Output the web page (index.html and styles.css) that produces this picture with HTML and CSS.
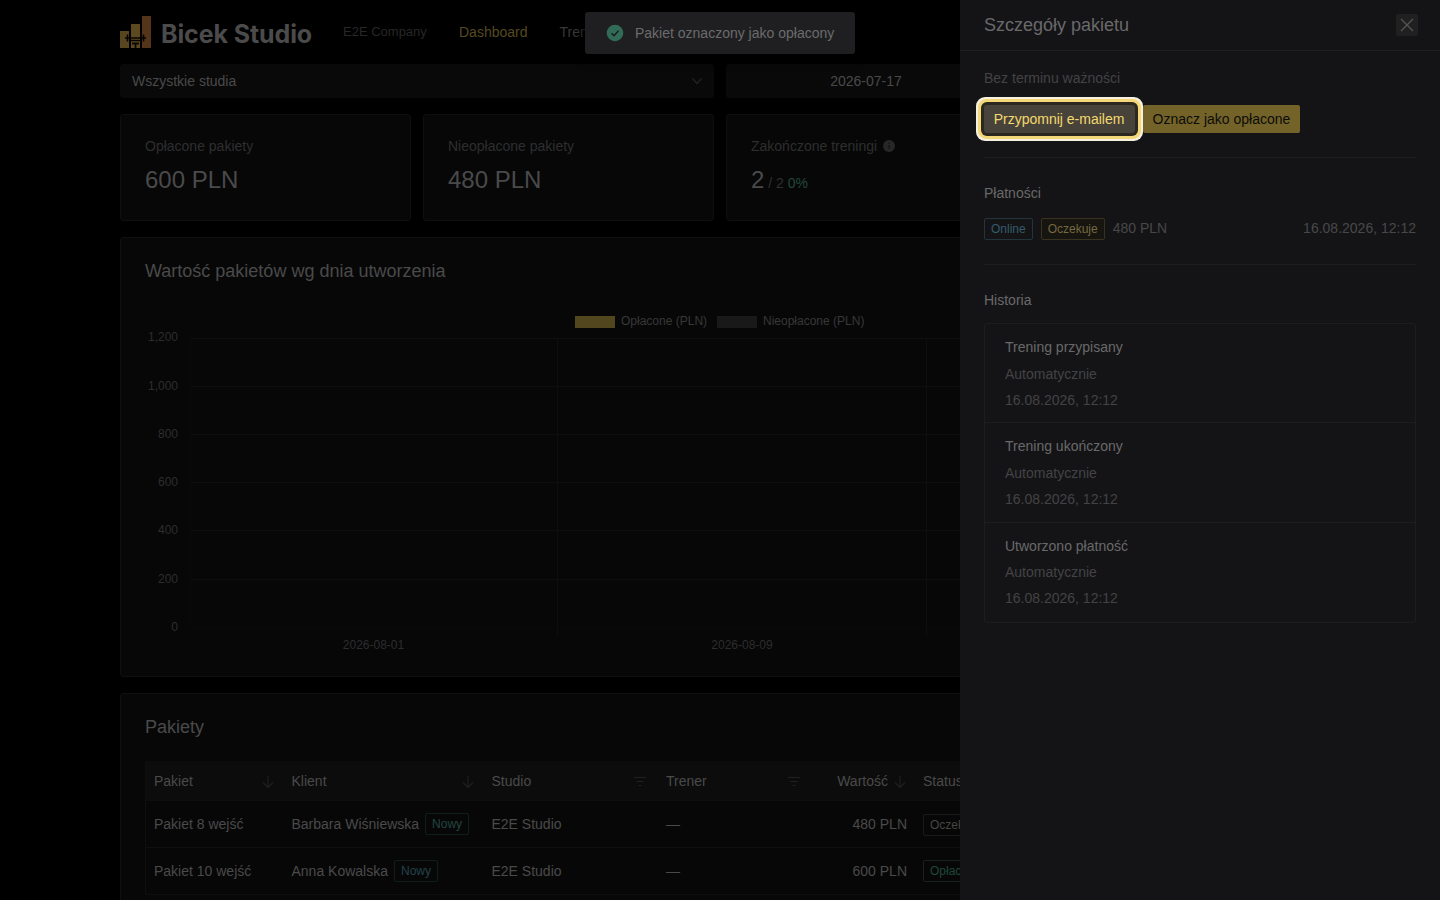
FILE: index.html
```html
<!DOCTYPE html>
<html lang="pl">
<head>
<meta charset="utf-8">
<title>Bicek Studio</title>
<link rel="stylesheet" href="styles.css">
</head>
<body>
<div class="page">
  <header class="header">
    <div class="brand">
      <svg class="brand-icon" width="31" height="32" viewBox="0 0 31 32">
        <rect x="0" y="15" width="9" height="17" fill="#57461f"/>
        <rect x="11" y="8" width="9" height="24" fill="#5c4922"/>
        <rect x="22" y="0" width="9" height="32" fill="#55351a"/>
        <path d="M5 22H26M7.500 18.500V25.500M23.500 18.500V25.500" stroke="#060402" stroke-width="1.600" fill="none"/>
        <path d="M11 24.500H20" stroke="#060402" stroke-width="1.400"/>
        <path d="M12 27.500H19M15.500 27.500V32" stroke="#0c0903" stroke-width="1.800" fill="none"/>
      </svg>
      <span class="brand-name">Bicek Studio</span>
    </div>
    <span class="company">E2E Company</span>
    <nav class="nav"><a class="active">Dashboard</a><a>Treningi</a></nav>
  </header>

  <main class="main">
    <div class="filters">
      <div class="select"><span>Wszystkie studia</span>
        <svg width="12" height="12" viewBox="0 0 12 12"><path d="M1.500 3.500L6 8.500L10.500 3.500" fill="none" stroke="#232323" stroke-width="1.200"/></svg>
      </div>
      <div class="range"><span>2026-07-17</span></div>
    </div>

    <div class="stats">
      <section class="card stat"><div class="label">Opłacone pakiety</div><div class="value">600 PLN</div></section>
      <section class="card stat"><div class="label">Nieopłacone pakiety</div><div class="value">480 PLN</div></section>
      <section class="card stat">
        <div class="label">Zakończone treningi
          <svg width="12" height="12" viewBox="0 0 12 12"><circle cx="6" cy="6" r="6" fill="#272727"/><path d="M6 5V9M6 2.800V4" stroke="#151515" stroke-width="1.200"/></svg>
        </div>
        <div class="value">2<span class="of"> / 2 </span><span class="pct">0%</span></div>
      </section>
      <section class="card stat"></section>
    </div>

    <section class="card chart-card">
      <h2>Wartość pakietów wg dnia utworzenia</h2>
      <svg class="chart" width="1150" height="360" viewBox="0 0 1150 360">
        <rect x="430" y="16" width="40" height="12" fill="#52461e"/>
        <text x="476" y="25" class="legend">Opłacone (PLN)</text>
        <rect x="572" y="16" width="40" height="12" fill="#191919"/>
        <text x="618" y="25" class="legend">Nieopłacone (PLN)</text>
        <path class="grid" d="M45 38.500H1150M45 86.500H1150M45 134.500H1150M45 182.500H1150M45 230.500H1150M45 279.500H1150M412.500 38V336M781.500 38V336"/>
        <path class="grid faint" d="M45 327.500H1150M45.500 38V327"/>
        <g class="axis end">
          <text x="33" y="41">1,200</text><text x="33" y="90">1,000</text><text x="33" y="138">800</text><text x="33" y="186">600</text><text x="33" y="234">400</text><text x="33" y="283">200</text><text x="33" y="331">0</text>
        </g>
        <g class="axis mid"><text x="228.500" y="349">2026-08-01</text><text x="597" y="349">2026-08-09</text></g>
      </svg>
    </section>

    <section class="card table-card">
      <h2>Pakiety</h2>
      <table class="table">
        <colgroup><col class="c1"><col class="c2"><col class="c3"><col class="c4"><col class="c5"><col></colgroup>
        <thead><tr>
          <th><div class="th"><span>Pakiet</span><svg width="14" height="14" viewBox="0 0 14 14"><path class="ic" d="M7 1V12.500M2 7.500L7 12.500L12 7.500"/></svg></div></th>
          <th><div class="th"><span>Klient</span><svg width="14" height="14" viewBox="0 0 14 14"><path class="ic" d="M7 1V12.500M2 7.500L7 12.500L12 7.500"/></svg></div></th>
          <th><div class="th filter"><span>Studio</span><svg width="14" height="14" viewBox="0 0 14 14"><path class="ic" d="M1 2.500H13M3.500 6.500H10.500M5.500 10.500H8.500"/></svg></div></th>
          <th><div class="th filter"><span>Trener</span><svg width="14" height="14" viewBox="0 0 14 14"><path class="ic" d="M1 2.500H13M3.500 6.500H10.500M5.500 10.500H8.500"/></svg></div></th>
          <th><div class="th right"><span>Wartość</span><svg width="14" height="14" viewBox="0 0 14 14"><path class="ic" d="M7 1V12.500M2 7.500L7 12.500L12 7.500"/></svg></div></th>
          <th>Status</th>
        </tr></thead>
        <tbody>
          <tr><td>Pakiet 8 wejść</td><td>Barbara Wiśniewska<span class="tag new">Nowy</span></td><td>E2E Studio</td><td>—</td><td class="num">480 PLN</td><td><span class="tag wait">Oczekuje</span></td></tr>
          <tr><td>Pakiet 10 wejść</td><td>Anna Kowalska<span class="tag new alt">Nowy</span></td><td>E2E Studio</td><td>—</td><td class="num">600 PLN</td><td><span class="tag paid">Opłacone</span></td></tr>
        </tbody>
      </table>
    </section>
  </main>
</div>

<div class="toast">
  <svg width="18" height="18" viewBox="0 0 18 18"><circle cx="9" cy="9" r="8.300" fill="#326b58"/><path d="M5.500 9.300L8 11.700L12.500 6.800" fill="none" stroke="#141b19" stroke-width="1.300"/></svg>
  <span>Pakiet oznaczony jako opłacony</span>
</div>

<aside class="drawer">
  <div class="drawer-head"><span>Szczegóły pakietu</span>
    <span class="close"><svg width="14" height="14" viewBox="0 0 14 14"><path d="M1 1L13 13M13 1L1 13" stroke="#555556" stroke-width="1.300"/></svg></span>
  </div>
  <div class="drawer-body">
    <div class="muted">Bez terminu ważności</div>
    <div class="actions">
      <button class="btn remind">Przypomnij e-mailem</button>
      <button class="btn paid-btn">Oznacz jako opłacone</button>
    </div>
    <div class="rule"></div>
    <h3>Płatności</h3>
    <div class="payment">
      <span class="tag online">Online</span><span class="tag pending">Oczekuje</span><span>480 PLN</span><span class="date">16.08.2026, 12:12</span>
    </div>
    <div class="rule"></div>
    <h3>Historia</h3>
    <ul class="history">
      <li><b>Trening przypisany</b><span>Automatycznie</span><span>16.08.2026, 12:12</span></li>
      <li><b>Trening ukończony</b><span>Automatycznie</span><span>16.08.2026, 12:12</span></li>
      <li><b>Utworzono płatność</b><span>Automatycznie</span><span>16.08.2026, 12:12</span></li>
    </ul>
  </div>
</aside>
</body>
</html>
```
FILE: styles.css
```css
* { box-sizing: border-box; }
body { margin: 0; height: 900px; overflow: hidden; background: #000; color: #4a4a4a; font: 14px/22px "Liberation Sans", Arial, sans-serif; }
.page { width: 1200px; height: 900px; overflow: hidden; margin: 0 auto; }
svg { display: block; flex: none; }
h2, h3 { margin: 0; font-weight: 400; }

.header { display: flex; height: 64px; align-items: center; }
.brand { display: flex; align-items: center; width: 223px; }
.brand-name { margin-left: 10px; padding-top: 4px; font: 700 25px/32px Inter, "Liberation Sans", sans-serif; letter-spacing: -0.1px; color: #4b4b4b; white-space: nowrap; }
.company { width: 116px; font-size: 13px; color: #272727; }
.nav { display: flex; gap: 32px; color: #383838; }
.nav .active { color: #554a20; }

.filters { display: grid; grid-template-columns: 1fr 1fr; gap: 12px; }
.select, .range { display: flex; height: 34px; align-items: center; background: #090909; border-radius: 3px; }
.select { justify-content: space-between; padding: 0 11px 0 12px; }
.range span { width: 280px; text-align: center; }

.card { background: #070708; border: 1px solid #0f0f0f; border-radius: 3px; }
.stats { display: grid; grid-template-columns: repeat(4, 1fr); gap: 12px; margin: 16px 0; }
.stat { height: 107px; padding: 20px 24px; }
.label { display: flex; align-items: center; gap: 6px; color: #2e2e2e; }
.value { margin-top: 4px; font-size: 24px; line-height: 38px; white-space: pre; }
.of, .pct { font-size: 14px; }
.of { color: #303030; }
.pct { color: #23483c; }

.chart-card { height: 440px; padding: 19px 24px 0; }
h2 { font-size: 18px; line-height: 28px; }
.chart { margin-top: 15px; }
.chart text { font-size: 12px; }
.legend { fill: #383838; }
.grid { stroke: #0e0e0f; fill: none; }
.faint { stroke: #090909; }
.axis { fill: #2d2d2d; }
.end { text-anchor: end; }
.mid { text-anchor: middle; }

.table-card { height: 300px; margin-top: 16px; padding: 19px 24px 0; }
.table { width: 1150px; margin-top: 20px; table-layout: fixed; border-collapse: separate; border-spacing: 0; border-left: 1px solid #0e0e0f; }
.c1 { width: 137.500px; }
.c2 { width: 200px; }
.c3 { width: 174.500px; }
.c4 { width: 154px; }
.c5 { width: 103px; }
th { height: 40px; padding: 0 8px; background: #0c0c0c; font-weight: 400; text-align: left; border-bottom: 1px solid #0e0e0f; }
td { height: 47px; padding: 0 8px; border-bottom: 1px solid #0f0f10; white-space: nowrap; }
.th { display: flex; justify-content: space-between; align-items: center; padding-right: 1px; }
.th svg { position: relative; top: 1px; }
.filter { padding-right: 3px; }
.right { justify-content: flex-end; gap: 5px; padding-right: 0; }
.ic { fill: none; stroke: #202020; stroke-width: 1.100; }
.num { text-align: right; }
.tag { display: inline-block; height: 22px; padding: 0 6px; border: 1px solid; border-radius: 2px; font-size: 12px; line-height: 20px; }
.new { position: relative; top: -1px; margin-left: 6px; color: #23463f; border-color: #101d1d; }
.alt { color: #24434a; }
.wait { color: #484641; border-color: #1b1a17; }
.paid { position: relative; top: -1px; color: #1f4838; border-color: #17221d; }

.toast { position: absolute; left: 585px; top: 12px; width: 270px; height: 42px; padding-left: 21px; display: flex; gap: 11px; align-items: center; background: #1f1f21; border-radius: 3px; color: #6b6b6c; box-shadow: 0 4px 12px #000; }

.drawer { position: absolute; top: 0; right: 0; width: 480px; height: 900px; background: #141416; color: #69696a; }
.drawer-head { display: flex; height: 51px; padding: 0 22px 1px 24px; align-items: center; justify-content: space-between; border-bottom: 1px solid #1f1f20; font-size: 18px; }
.close { display: grid; width: 22px; height: 22px; place-items: center; background: #202021; border-radius: 2px; }
.drawer-body { padding: 16px 24px; }
.muted { color: #434345; }
.actions { display: flex; gap: 8px; margin-top: 16px; }
.btn { position: relative; height: 28px; padding: 0; border: 0; border-radius: 2px; font: 14px/28px "Liberation Sans", Arial, sans-serif; }
.remind { width: 151px; padding-right: 1px; border-radius: 3px; background: #48433a; color: #f3d96e; box-shadow: 0 0 0 3px #2c281f, 0 0 0 6px #f3d778, 0 0 0 8px #f5f0df; }
.paid-btn { width: 157px; background: #736329; color: #0d0c08; }
.rule { height: 1px; margin: 24px 0; background: #1e1e1f; }
h3 { font-size: 14px; line-height: 22px; }
.payment { display: flex; gap: 8px; margin-top: 14px; height: 22px; line-height: 21px; color: #48484a; }
.date { margin-left: auto; }
.online { color: #335b6b; border-color: #23343c; }
.pending { color: #76683f; border-color: #383221; background: #171510; }
.history { height: 300px; margin: 12px 0 0; padding: 0; list-style: none; border: 1px solid #1d1d1e; border-radius: 3px; display: grid; grid-template-rows: 99px 100px 99px; }
.history li { display: flex; flex-direction: column; gap: 4px; padding: 12px 20px 0; border-bottom: 1px solid #1d1d1e; }
.history li:last-child { padding-top: 11.700px; border: 0; }
.history b { margin-bottom: 0.600px; font-weight: 400; }
.history span { color: #434345; }
```
